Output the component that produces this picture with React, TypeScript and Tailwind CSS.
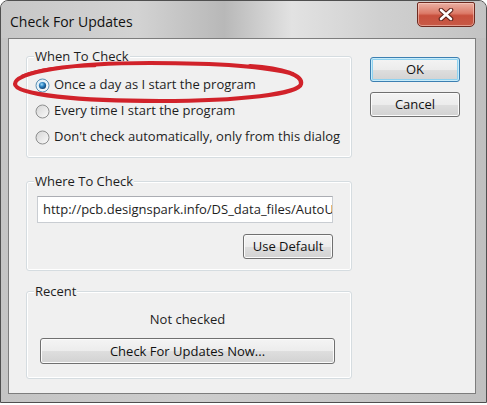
import React from 'react';

// Win7-style "Check For Updates" dialog with a hand-drawn red annotation

const Radio = ({ checked }: { checked?: boolean }) => (
  <svg width="15" height="15" viewBox="0 0 15 15" className="shrink-0">
    <defs>
      <linearGradient id={checked ? 'rg-on' : 'rg-off'} x1="0" y1="0" x2="1" y2="1">
        <stop offset="0" stopColor={checked ? '#d9ecf7' : '#d4d4d4'} />
        <stop offset="1" stopColor="#fbfbfb" />
      </linearGradient>
      <radialGradient id="dot" cx="0.4" cy="0.35" r="0.7">
        <stop offset="0" stopColor="#9fdcf8" />
        <stop offset="0.45" stopColor="#2c83c3" />
        <stop offset="1" stopColor="#0d3b66" />
      </radialGradient>
    </defs>
    <circle cx="7.5" cy="7.5" r="6.5" fill={`url(#${checked ? 'rg-on' : 'rg-off'})`} stroke={checked ? '#5b8fb3' : '#8e8f8f'} strokeWidth="1" />
    {checked && <circle cx="7.5" cy="7.5" r="3.6" fill="url(#dot)" />}
  </svg>
);

const Button = ({ children, primary, className = '' }: { children: React.ReactNode; primary?: boolean; className?: string }) => (
  <div
    className={`flex items-center justify-center rounded-[3px] border bg-[linear-gradient(#f4f4f4,#ececec_50%,#dedede_51%,#d2d2d2)] text-[13px] leading-none text-[#111] ${
      primary
        ? 'border-[#3c7fb1] shadow-[inset_0_0_0_1px_#c8ecfa,inset_0_0_0_2px_#8fd2f0]'
        : 'border-[#707070] shadow-[inset_0_0_0_1px_#fbfbfb]'
    } ${className}`}
  >
    {children}
  </div>
);

const Group = ({ label, className = '', children }: { label: string; className?: string; children: React.ReactNode }) => (
  <div className={`relative w-[326px] rounded-[3px] border border-[#d5dce0] shadow-[inset_0_0_0_1px_#ffffff] ${className}`}>
    <span className="absolute left-[7px] top-[-9px] bg-[#f0f0f0] px-[1px] leading-[16px]">{label}</span>
    {children}
  </div>
);

export default function App() {
  return (
    <div className="relative h-[405px] w-[487px] bg-white font-['Open_Sans','Noto_Sans',sans-serif] text-[13px] text-[#1e1e1e]">
      <div className="flex h-[403px] w-[487px] flex-col rounded-t-[8px] border border-[#4f4f4f] bg-[linear-gradient(to_right,#c4c4c4,#cdcdcd_40%,#c7c7c7_70%,#c0c0c0)] pb-[8px] pl-[7px] pr-[10px]">
        {/* Title bar */}
        <div className="-ml-[7px] -mr-[10px] flex h-[37px] shrink-0 items-start justify-between rounded-t-[7px] bg-[linear-gradient(to_right,#c7c7c7,#d3d3d3_28%,#b8b8b8_46%,#e2e2e2_60%,#d0d0d0_78%,#c3c3c3)] pl-[9px] pr-[11px]">
          <span className="pt-[12px] text-[14px] leading-[18px] text-[#111]">Check For Updates</span>
          <div className="mt-[1px] flex h-[25px] w-[58px] items-center justify-center rounded-b-[5px] rounded-t-[2px] border border-[#6e2a20] bg-[linear-gradient(#eab0a3,#dc7a68_45%,#c8503d_55%,#c75a47)] shadow-[inset_0_0_0_1px_rgba(255,220,210,0.5)]">
            <svg width="16" height="13" viewBox="0 0 16 13">
              <path d="M3 2 L13 11 M13 2 L3 11" stroke="#5a2018" strokeWidth="4.6" strokeLinecap="round" />
              <path d="M3 2 L13 11 M13 2 L3 11" stroke="#ffffff" strokeWidth="2.6" strokeLinecap="round" />
            </svg>
          </div>
        </div>

        {/* Client area */}
        <div className="flex flex-1 gap-[18px] border border-[#7d7d7d] bg-[#f0f0f0] pl-[17px]">
          <div className="flex flex-col">
            <Group label="When To Check" className="mt-[17px] h-[102px] pl-[8px] pt-[15px]">
              <div className="flex h-[26px] items-center gap-[4px]">
                <Radio checked />
                <span>Once a day as I start the program</span>
              </div>
              <div className="flex h-[26px] items-center gap-[4px]">
                <Radio />
                <span>Every time I start the program</span>
              </div>
              <div className="flex h-[26px] items-center gap-[4px]">
                <Radio />
                <span>Don't check automatically, only from this dialog</span>
              </div>
            </Group>

            <Group label="Where To Check" className="mt-[23px] flex h-[90px] flex-col pl-[10px] pr-[18px] pt-[14px]">
              <div className="flex h-[27px] w-[296px] items-center overflow-hidden whitespace-nowrap border border-[#c9cdd2] border-t-[#abadb3] bg-white px-[5px]">
                http://pcb.designspark.info/DS_data_files/AutoUpdate.xml
              </div>
              <Button className="mt-[11px] h-[25px] w-[90px] self-end">Use Default</Button>
            </Group>

            <Group label="Recent" className="mt-[20px] flex h-[88px] flex-col pl-[13px] pt-[18px]">
              <div className="w-[295px] text-center leading-[18px]">Not checked</div>
              <Button className="mt-[10px] h-[26px] w-[295px]">Check For Updates Now...</Button>
            </Group>
          </div>

          <div className="flex flex-col gap-[10px] pt-[18px]">
            <Button primary className="h-[25px] w-[90px]">OK</Button>
            <Button className="h-[25px] w-[90px]">Cancel</Button>
          </div>
        </div>
      </div>

      {/* hand-drawn red annotation */}
      <svg className="pointer-events-none absolute left-0 top-0" width="487" height="405" viewBox="0 0 487 405">
        <path
          d="M250 66 C285 68 303 76 301 84 C299 94 240 101 160 101 C80 101 15 95 15 84 C15 72 70 63 150 63 C215 63 265 66 293 74"
          fill="none"
          stroke="#d1222a"
          strokeWidth="4.2"
          strokeLinecap="round"
        />
        <path d="M22 76 C40 68 70 66 95 66" fill="none" stroke="#d1222a" strokeWidth="2.5" strokeLinecap="round" />
      </svg>
    </div>
  );
}
